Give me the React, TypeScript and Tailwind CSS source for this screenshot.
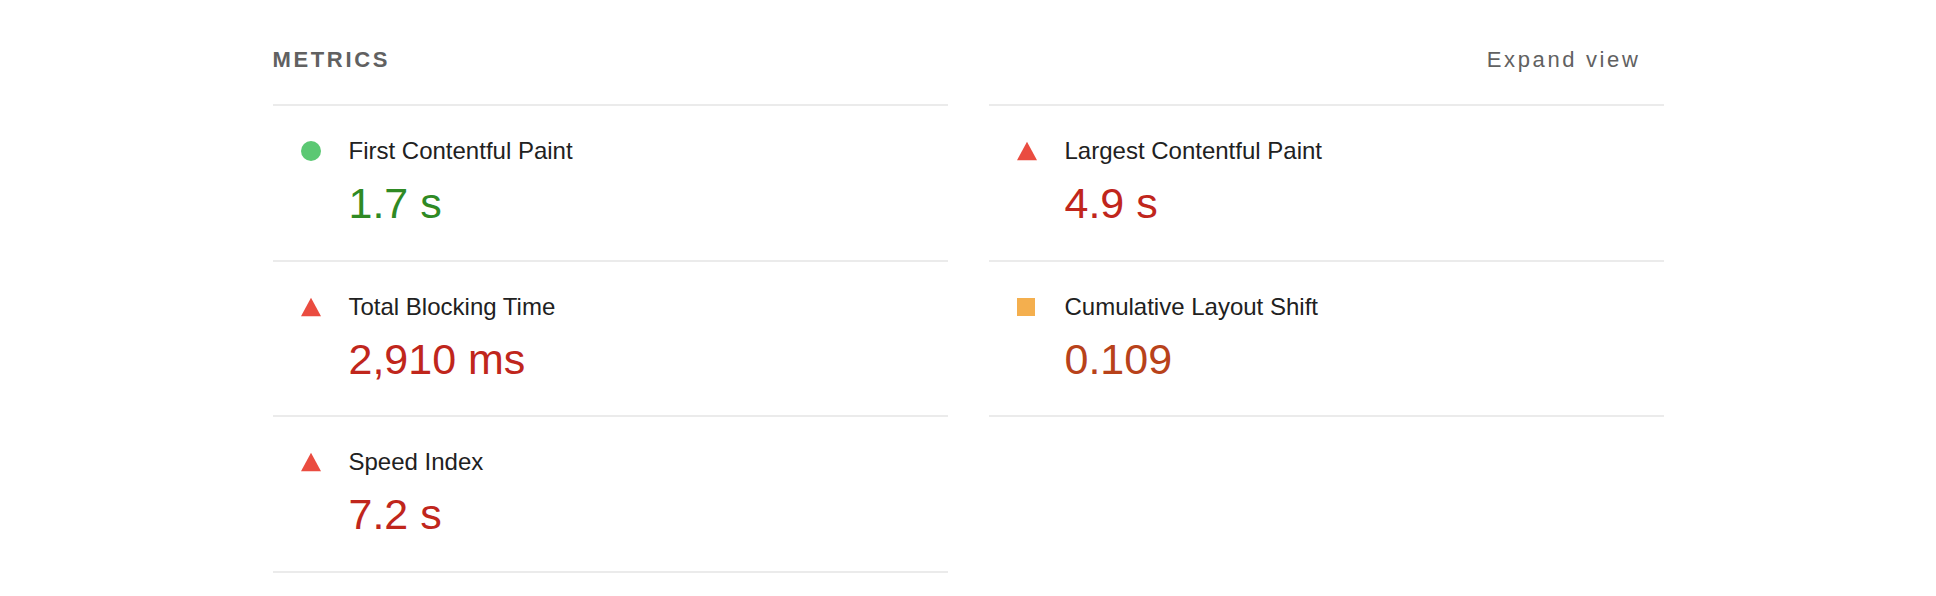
import React from "react";

type Kind = "pass" | "fail" | "average";

const metrics: { label: string; value: string; kind: Kind }[][] = [
  [
    { label: "First Contentful Paint", value: "1.7 s", kind: "pass" },
    { label: "Total Blocking Time", value: "2,910 ms", kind: "fail" },
    { label: "Speed Index", value: "7.2 s", kind: "fail" },
  ],
  [
    { label: "Largest Contentful Paint", value: "4.9 s", kind: "fail" },
    { label: "Cumulative Layout Shift", value: "0.109", kind: "average" },
  ],
];

function Icon({ kind }: { kind: Kind }) {
  if (kind === "pass") {
    return <span className="block w-[20px] h-[20px] rounded-full bg-[#5bc873]" />;
  }
  if (kind === "average") {
    return (
      <span className="flex w-[20px] h-[20px] items-center">
        <span className="block w-[18px] h-[18px] bg-[#f4af4e]" />
      </span>
    );
  }
  return (
    <svg width="20" height="20" viewBox="0 0 20 20" className="block">
      <polygon points="10,0.8 20,19.3 0,19.3" fill="#ea4c40" />
    </svg>
  );
}

const valueColor: Record<Kind, string> = {
  pass: "text-[#2f8a24]",
  fail: "text-[#c0261c]",
  average: "text-[#b8421a]",
};

export default function App() {
  return (
    <div className="w-[1936px] h-[596px] bg-white font-['Liberation_Sans',Arial,sans-serif] overflow-hidden">
      <div className="mx-auto w-[1391px] pt-[46px]">
        <div className="flex justify-between h-[28px] mb-[30px]">
          <div className="text-[22px] leading-[28px] font-bold tracking-[0.12em] text-[#616161] uppercase">
            Metrics
          </div>
          <div className="text-[22px] leading-[28px] tracking-[0.12em] text-[#616161] mr-[23px]">
            Expand view
          </div>
        </div>
        <div className="grid grid-cols-2 gap-x-[41px] items-start">
          {metrics.map((col, ci) => (
            <div key={ci} className="flex flex-col border-t-2 border-[#ebebeb]">
              {col.map((m) => (
                <div
                  key={m.label}
                  className="h-[155.5px] border-b-2 border-[#ebebeb] pt-[30px] pl-[28px]"
                >
                  <div className="flex items-center h-[30px]">
                    <Icon kind={m.kind} />
                    <span className="ml-[28px] text-[24px] leading-[30px] text-[#212121]">
                      {m.label}
                    </span>
                  </div>
                  <div
                    className={`ml-[48px] mt-[12px] text-[43px] leading-[50px] ${valueColor[m.kind]}`}
                  >
                    {m.value}
                  </div>
                </div>
              ))}
            </div>
          ))}
        </div>
      </div>
    </div>
  );
}
